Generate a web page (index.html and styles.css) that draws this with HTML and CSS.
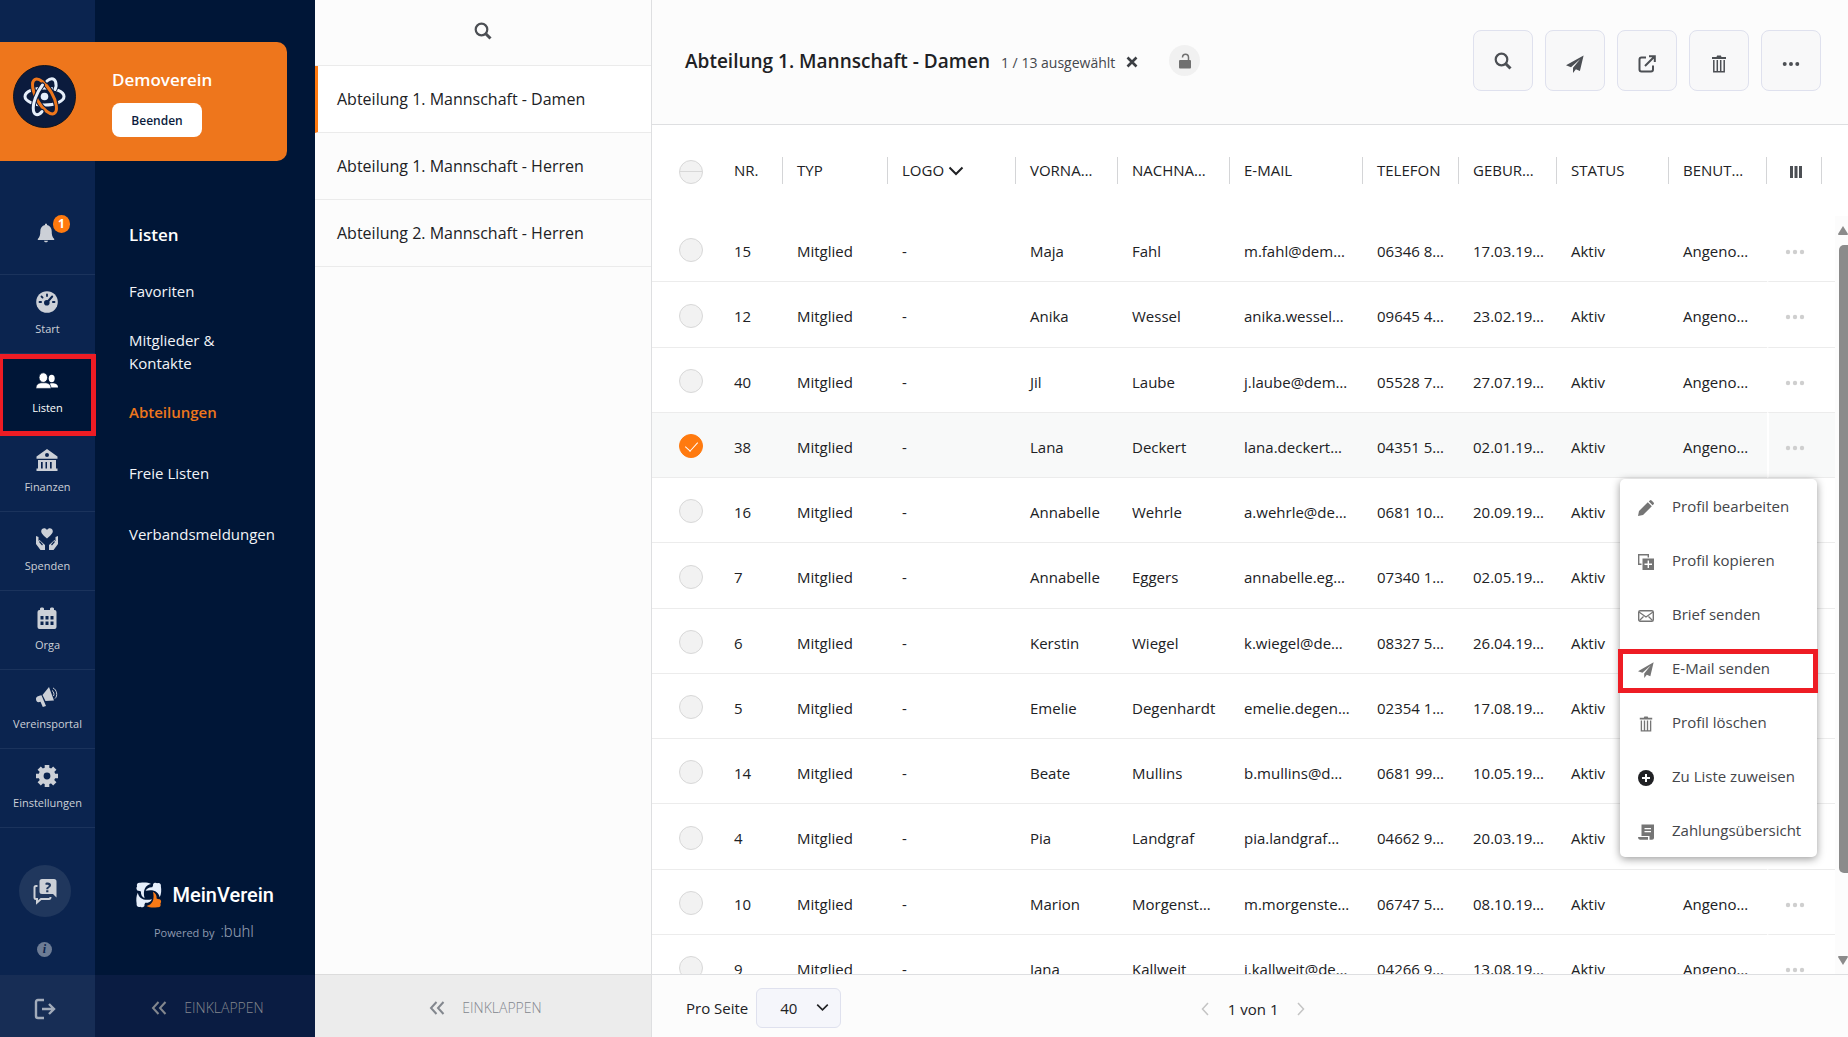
FILE: index.html
```
<!DOCTYPE html>
<html lang="de">
<head>
<meta charset="utf-8">
<meta name="viewport" content="width=device-width, initial-scale=1">
<title>MeinVerein – Abteilungen</title>
<link rel="stylesheet" href="styles.css">
</head>
<body>
<svg class="sprite" aria-hidden="true">
  <symbol id="i-search" viewBox="0 0 18 18"><circle cx="7.5" cy="7.5" r="5.8" fill="none" stroke="currentColor" stroke-width="2.2"/><path d="M11.5 11.5l5 5" stroke="currentColor" stroke-width="3"/></symbol>
  <symbol id="i-plane" viewBox="0 0 18 18"><path fill="currentColor" d="M17.6.4L0 10.3l5 1.9L14.3 4 7 12.8V18l2.9-3.7 4 1.6z"/></symbol>
  <symbol id="i-trash" viewBox="0 0 16 18"><path fill="currentColor" d="M1 2h4.5l.6-1.5h3.8L10.500 2H15v2H1z"/><path fill="none" stroke="currentColor" stroke-width="1.5" d="M2.8 5v11.8h10.400V5M6.300 5v11.500M9.700 5v11.500"/></symbol>
  <symbol id="i-dots" viewBox="0 0 20 6"><g fill="currentColor"><circle cx="3" cy="3" r="2.200"/><circle cx="10" cy="3" r="2.200"/><circle cx="17" cy="3" r="2.200"/></g></symbol>
  <symbol id="i-collapse" viewBox="0 0 16 14"><path d="M7.500 1L2 7l5.500 6M14.500 1L9 7l5.500 6" fill="none" stroke="currentColor" stroke-width="2"/></symbol>
  <symbol id="i-down" viewBox="0 0 16 10"><path d="M1.500 1.500L8 8l6.500-6.500" fill="none" stroke="currentColor" stroke-width="2"/></symbol>
</svg>

<div class="app">
  <aside class="sidebar">
    <div class="club">
      <svg class="club-logo" viewBox="0 0 63 63" aria-hidden="true">
        <circle cx="31.500" cy="31.500" r="31" fill="#0b1b3d" stroke="#11151f"/>
        <g fill="none" stroke-width="3" stroke-linecap="round">
          <ellipse cx="31.500" cy="31.500" rx="19.500" ry="8.500" stroke="#e6effb"/>
          <ellipse cx="31.500" cy="31.500" rx="19.500" ry="8" stroke="#0b1b3d" stroke-width="5" transform="rotate(60 31.500 31.500)"/>
          <ellipse cx="31.500" cy="31.500" rx="19.500" ry="8" stroke="#ee761c" transform="rotate(60 31.500 31.500)"/>
          <path d="M29 46.500c-3 4-7.500 4.500-8.500-.5-1.500-7 3.500-19 9-26M34 16c3-3 7-3.500 8.500.5 1 3 .5 6-.5 8" stroke="#0b1b3d" stroke-width="5"/>
          <path d="M29 46.500c-3 4-7.500 4.500-8.500-.5-1.500-7 3.500-19 9-26M34 16c3-3 7-3.500 8.500.5 1 3 .5 6-.5 8" stroke="#e6effb"/>
        </g>
        <circle cx="31.500" cy="31.500" r="3.800" fill="#e6effb"/>
      </svg>
      <div class="club-info">
        <strong class="club-name">Demoverein</strong>
        <button class="club-exit" type="button">Beenden</button>
      </div>
    </div>

    <nav class="rail" aria-label="Hauptmenü">
      <a class="rail-item rail-bell" href="#" aria-label="Benachrichtigungen">
        <svg class="bell" viewBox="0 0 18 20"><path fill="currentColor" d="M8 .8h2v1.100c3 .7 4.700 3 4.700 6 0 4 .6 6.200 2.500 8.100v.9H.8V16c1.900-1.900 2.500-4.100 2.500-8.100 0-3 1.700-5.300 4.700-6zM7 17.800h4c-.3 1-1 1.500-2 1.500s-1.700-.5-2-1.500z"/></svg>
        <span class="badge">1</span>
      </a>
      <a class="rail-item" href="#">
        <svg class="rail-icon" viewBox="0 0 22 22"><circle cx="11" cy="11" r="10.800" fill="currentColor"/><g stroke="#0b244f" stroke-width="1.800" stroke-linecap="round"><path d="M3.500 11h1.600M16.900 11h1.600M11 3.300v1.800M5.500 5.500l1.100 1.100"/><path d="M11 11.500L16.200 5.500" stroke-width="2"/></g><circle cx="10.800" cy="11.800" r="2.800" fill="#0b244f"/></svg>
        <span>Start</span>
      </a>
      <a class="rail-item active" href="#" aria-current="page">
        <svg class="rail-icon" viewBox="0 0 22 22"><g fill="currentColor"><ellipse cx="15.700" cy="8.500" rx="3" ry="3.700"/><path d="M14 13.500c4-.8 8 .3 8 4H15z"/><ellipse cx="7.300" cy="7.600" rx="4.300" ry="4.800" stroke="#001637" stroke-width=".8"/><path d="M0 18.400c0-4 2.500-5 5-5.600h4.800c2.700.6 5.200 1.600 5.200 5.600z" stroke="#001637" stroke-width=".6"/></g></svg>
        <span>Listen</span>
        <span class="marker"></span>
      </a>
      <a class="rail-item" href="#">
        <svg class="rail-icon" viewBox="0 0 22 22"><path fill="currentColor" fill-rule="evenodd" d="M11 0l10.500 7.500v2.200H.5V7.500zM11 4a2 2 0 100 4 2 2 0 000-4zM2 11h18v8.500h1.500V22H.5v-2.500H2zM5 13v6.500h1.700V13zM9.500 13v6.500H11V13zM14 13v6.500h1.700V13z"/></svg>
        <span>Finanzen</span>
      </a>
      <a class="rail-item" href="#">
        <svg class="rail-icon" viewBox="0 0 22 22"><path fill="currentColor" d="M11 10.500C7 7 5.200 5.500 5.200 3.300 5.200.2 9.300-.8 11 2c1.700-2.800 5.800-1.800 5.800 1.300 0 2.200-1.800 3.700-5.800 7.200zM0 8l2.500 1v4l1-1 5.500 5V22H4.500L0 16zM22 8l-2.500 1v4l-1-1-5.500 5V22h4.500L22 16z"/><path d="M3.500 13.500l3 3.500M18.500 13.500l-3 3.500" stroke="#0b244f" stroke-width="1.200"/></svg>
        <span>Spenden</span>
      </a>
      <a class="rail-item" href="#">
        <svg class="rail-icon" viewBox="0 0 22 22"><path fill="currentColor" fill-rule="evenodd" d="M4 3V1.500C4 0 8 0 8 1.500V3h6V1.500C14 0 18 0 18 1.500V3h.500q2 0 2 2v15q0 2-2 2h-15q-2 0-2-2V5q0-2 2-2zM4.500 9v3.500h3V9zM9.500 9v3.500h3V9zM14.500 9v3.500h3V9zM4.500 14.500V18h3v-3.500zM9.500 14.500V18h3v-3.500zM14.500 14.500V18h3v-3.500z"/></svg>
        <span>Orga</span>
      </a>
      <a class="rail-item" href="#">
        <svg class="rail-icon" viewBox="0 0 22 22"><path fill="currentColor" d="M13 1l5 13.500-8.500.5L6.500 9zM5.500 9.300l2.500 6 2 4.700-3.200 1-2.300-5.200C1.500 17 0 15.500 0 13c0-1.800 1.200-2.800 5.500-3.700z"/><path fill="none" stroke="currentColor" stroke-width="1" d="M16 4.500c1.800 1 2.500 4 1.500 5.500M17 2c3.800 1.500 5 8 2 10.500"/></svg>
        <span>Vereinsportal</span>
      </a>
      <a class="rail-item" href="#">
        <svg class="rail-icon" viewBox="0 0 22 22"><circle cx="11" cy="11" r="5.900" fill="none" stroke="currentColor" stroke-width="5"/><g stroke="currentColor" stroke-width="4.600"><path d="M11 0v4M11 18v4M0 11h4M18 11h4M3.200 3.200l3 3M15.800 15.800l3 3M3.200 18.800l3-3M15.800 6.200l3-3"/></g></svg>
        <span>Einstellungen</span>
      </a>
      <div class="rail-help">
        <button class="help" type="button" aria-label="Hilfe">
          <svg viewBox="0 0 24 28"><path fill="currentColor" fill-rule="evenodd" d="M9 2h12q2.500 0 2.500 2.500v16L20 17H9q-2.500 0-2.500-2.500v-10Q6.500 2 9 2zM12.500 6v1.800h2c1.800 0 1.500 1.400.3 2-1.200.7-1.500 1.200-1.500 2.400h2c0-1.400 2.700-1.800 2.700-4.100C18 6 15.500 5 12.500 6zM13.200 13.200v2h2.200v-2z"/><path d="M4.500 9H3Q1.500 9 1.500 10.500v10Q1.500 22 3 22h1v3.500L8 22h8q1.500 0 1.500-2" fill="none" stroke="currentColor" stroke-width="2"/></svg>
        </button>
        <button class="info" type="button" aria-label="Info">i</button>
      </div>
      <button class="logout" type="button" aria-label="Abmelden">
        <svg viewBox="0 0 22 22"><path d="M10 2H4Q2 2 2 4v14q0 2 2 2h6M8 11h12M15 6l5 5-5 5" fill="none" stroke="currentColor" stroke-width="2.400"/></svg>
      </button>
    </nav>

    <nav class="subnav" aria-label="Listen">
      <h2>Listen</h2>
      <ul>
        <li><a href="#">Favoriten</a></li>
        <li><a href="#">Mitglieder &amp;<br>Kontakte</a></li>
        <li><a class="active" href="#">Abteilungen</a></li>
        <li class="wide"><a href="#">Freie Listen</a></li>
        <li class="wide"><a href="#">Verbandsmeldungen</a></li>
      </ul>
      <div class="brand">
        <div class="brand-name">
          <svg viewBox="0 0 28 28" aria-hidden="true">
            <defs><path id="figure" d="M18.600 10.500c3 1.500 4.200 4 4 7.300 1.200.6 2 1.200 3.600.9 1.800 1.400 1.600 3.600.6 4.500 1 2.600-.8 4.600-3.300 4.100C19 28 15 27.800 11.500 26c6.200-1 9.300-7 7.100-15.500z"/></defs>
            <use href="#figure" fill="#f97a16"/>
            <g fill="#e6effb">
              <use href="#figure" transform="rotate(90 14 14)"/>
              <use href="#figure" transform="rotate(180 14 14)"/>
              <use href="#figure" transform="rotate(270 14 14)"/>
            </g>
          </svg>
          <span>MeinVerein</span>
        </div>
        <div class="brand-by">Powered by <span>:buhl</span></div>
      </div>
      <button class="collapse" type="button"><svg><use href="#i-collapse"/></svg>EINKLAPPEN</button>
    </nav>
  </aside>

  <section class="lists" aria-label="Abteilungen">
    <button class="lists-search" type="button" aria-label="Suchen"><svg><use href="#i-search"/></svg></button>
    <ul>
      <li><a class="active" href="#">Abteilung 1. Mannschaft - Damen</a></li>
      <li><a href="#">Abteilung 1. Mannschaft - Herren</a></li>
      <li><a href="#">Abteilung 2. Mannschaft - Herren</a></li>
    </ul>
    <button class="collapse" type="button"><svg><use href="#i-collapse"/></svg>EINKLAPPEN</button>
  </section>

  <main class="content">
    <header class="toolbar">
      <h1>Abteilung 1. Mannschaft - Damen</h1>
      <span class="selection">1 / 13 ausgewählt</span>
      <button class="clear" type="button" aria-label="Auswahl aufheben"><svg viewBox="0 0 12 12"><path d="M1.500 1.500l9 9M10.500 1.500l-9 9" stroke="currentColor" stroke-width="2.600"/></svg></button>
      <button class="lock" type="button" aria-label="Entsperrt"><svg viewBox="0 0 12 16"><rect x="0" y="7" width="12" height="8.500" rx="1" fill="currentColor"/><path d="M3.500 4.500C3.500 0 9.500 0 9.500 4.500V7" fill="none" stroke="currentColor" stroke-width="1.500"/></svg></button>
      <div class="tools">
        <button class="tool tool-search" type="button" aria-label="Suchen"><svg><use href="#i-search"/></svg></button>
        <button class="tool" type="button" aria-label="E-Mail senden"><svg><use href="#i-plane"/></svg></button>
        <button class="tool" type="button" aria-label="Exportieren"><svg viewBox="0 0 18 18"><path d="M8 2.500H3.500q-2 0-2 2V14.500q0 2 2 2h9.500q2 0 2-2V10.500M7 11L16 2M11 1.200h5.800V7" fill="none" stroke="currentColor" stroke-width="2"/></svg></button>
        <button class="tool" type="button" aria-label="Löschen"><svg><use href="#i-trash"/></svg></button>
        <button class="tool" type="button" aria-label="Mehr"><svg><use href="#i-dots"/></svg></button>
      </div>
    </header>

    <div class="grid">
      <div class="grid-scroll">
        <table>
          <colgroup><col class="c-check"><col class="c-nr"><col class="c-typ"><col class="c-logo"><col class="c-first"><col class="c-last"><col class="c-mail"><col class="c-phone"><col class="c-birth"><col class="c-status"><col class="c-user"><col class="c-more"></colgroup>
          <thead>
            <tr>
              <th class="check"><input class="all" type="checkbox" aria-label="Alle auswählen"></th>
              <th><span>NR.</span></th>
              <th><span>TYP</span></th>
              <th><span>LOGO <svg class="sort"><use href="#i-down"/></svg></span></th>
              <th><span>VORNA…</span></th>
              <th><span>NACHNA…</span></th>
              <th><span>E-MAIL</span></th>
              <th><span>TELEFON</span></th>
              <th><span>GEBUR…</span></th>
              <th><span>STATUS</span></th>
              <th><span>BENUT…</span></th>
              <th class="more"><span><button class="columns" type="button" aria-label="Spalten"><svg viewBox="0 0 12 12"><path fill="currentColor" d="M0 0h3v12H0zM4.500 0h3v12h-3zM9 0h3v12H9z"/></svg></button></span></th>
            </tr>
          </thead>
          <tbody>
            <tr><td class="check"><input type="checkbox" aria-label="Maja Fahl"></td><td>15</td><td>Mitglied</td><td>-</td><td>Maja</td><td>Fahl</td><td>m.fahl@dem…</td><td>06346 8…</td><td>17.03.19…</td><td>Aktiv</td><td>Angeno…</td><td class="more"><button type="button" aria-label="Aktionen"><svg><use href="#i-dots"/></svg></button></td></tr>
            <tr><td class="check"><input type="checkbox" aria-label="Anika Wessel"></td><td>12</td><td>Mitglied</td><td>-</td><td>Anika</td><td>Wessel</td><td>anika.wessel…</td><td>09645 4…</td><td>23.02.19…</td><td>Aktiv</td><td>Angeno…</td><td class="more"><button type="button" aria-label="Aktionen"><svg><use href="#i-dots"/></svg></button></td></tr>
            <tr><td class="check"><input type="checkbox" aria-label="Jil Laube"></td><td>40</td><td>Mitglied</td><td>-</td><td>Jil</td><td>Laube</td><td>j.laube@dem…</td><td>05528 7…</td><td>27.07.19…</td><td>Aktiv</td><td>Angeno…</td><td class="more"><button type="button" aria-label="Aktionen"><svg><use href="#i-dots"/></svg></button></td></tr>
            <tr class="selected"><td class="check"><input type="checkbox" checked aria-label="Lana Deckert"></td><td>38</td><td>Mitglied</td><td>-</td><td>Lana</td><td>Deckert</td><td>lana.deckert…</td><td>04351 5…</td><td>02.01.19…</td><td>Aktiv</td><td>Angeno…</td><td class="more"><button type="button" aria-label="Aktionen" aria-expanded="true"><svg><use href="#i-dots"/></svg></button>
              <ul class="menu">
                <li><button type="button"><svg viewBox="0 0 16 16"><path fill="currentColor" d="M0 16l1-5L9.800 2.300l4 4L5 15zM10.800 1.400l1-1q.9-.7 1.800 0l2 2q.8.900 0 1.800l-1 1z"/></svg>Profil bearbeiten</button></li>
                <li><button type="button"><svg viewBox="0 0 16 16"><path d="M3.500 10.300H.7V.7h9.600v2.800" fill="none" stroke="currentColor" stroke-width="1.400"/><path fill="currentColor" fill-rule="evenodd" d="M4.500 4.500H16V16H4.500zM9.600 6.500v3.100H6.500v1.400h3.100v3h1.400v-3h3V9.600h-3V6.500z"/></svg>Profil kopieren</button></li>
                <li><button type="button"><svg viewBox="0 0 16 16"><rect x=".7" y="2.700" width="14.600" height="10.600" rx="1.500" fill="none" stroke="currentColor" stroke-width="1.400"/><path d="M1 4l7 5 7-5M1.500 12.500l4-4M14.500 12.500l-4-4" fill="none" stroke="currentColor" stroke-width="1.200"/></svg>Brief senden</button></li>
                <li><button type="button"><svg><use href="#i-plane"/></svg>E-Mail senden</button><span class="marker"></span></li>
                <li><button type="button"><svg><use href="#i-trash"/></svg>Profil löschen</button></li>
                <li><button type="button"><svg class="dark" viewBox="0 0 16 16"><circle cx="8" cy="8" r="8" fill="currentColor"/><path d="M8 4v8M4 8h8" stroke="#fff" stroke-width="2"/></svg>Zu Liste zuweisen</button></li>
                <li><button type="button"><svg viewBox="0 0 16 16"><path fill="currentColor" fill-rule="evenodd" d="M3.500.5H16V14q0 1.800-2 1.800h-2.500V12H3.500zM6.500 4v1.200H13V4zM6.500 7v1.200H13V7zM0 13h10v2.800H2Q0 15.500 0 13z"/></svg>Zahlungsübersicht</button></li>
              </ul></td></tr>
            <tr><td class="check"><input type="checkbox" aria-label="Annabelle Wehrle"></td><td>16</td><td>Mitglied</td><td>-</td><td>Annabelle</td><td>Wehrle</td><td>a.wehrle@de…</td><td>0681 10…</td><td>20.09.19…</td><td>Aktiv</td><td></td><td class="more"></td></tr>
            <tr><td class="check"><input type="checkbox" aria-label="Annabelle Eggers"></td><td>7</td><td>Mitglied</td><td>-</td><td>Annabelle</td><td>Eggers</td><td>annabelle.eg…</td><td>07340 1…</td><td>02.05.19…</td><td>Aktiv</td><td></td><td class="more"></td></tr>
            <tr><td class="check"><input type="checkbox" aria-label="Kerstin Wiegel"></td><td>6</td><td>Mitglied</td><td>-</td><td>Kerstin</td><td>Wiegel</td><td>k.wiegel@de…</td><td>08327 5…</td><td>26.04.19…</td><td>Aktiv</td><td></td><td class="more"></td></tr>
            <tr><td class="check"><input type="checkbox" aria-label="Emelie Degenhardt"></td><td>5</td><td>Mitglied</td><td>-</td><td>Emelie</td><td>Degenhardt</td><td>emelie.degen…</td><td>02354 1…</td><td>17.08.19…</td><td>Aktiv</td><td></td><td class="more"></td></tr>
            <tr><td class="check"><input type="checkbox" aria-label="Beate Mullins"></td><td>14</td><td>Mitglied</td><td>-</td><td>Beate</td><td>Mullins</td><td>b.mullins@d…</td><td>0681 99…</td><td>10.05.19…</td><td>Aktiv</td><td></td><td class="more"></td></tr>
            <tr><td class="check"><input type="checkbox" aria-label="Pia Landgraf"></td><td>4</td><td>Mitglied</td><td>-</td><td>Pia</td><td>Landgraf</td><td>pia.landgraf…</td><td>04662 9…</td><td>20.03.19…</td><td>Aktiv</td><td></td><td class="more"></td></tr>
            <tr><td class="check"><input type="checkbox" aria-label="Marion Morgenstern"></td><td>10</td><td>Mitglied</td><td>-</td><td>Marion</td><td>Morgenst…</td><td>m.morgenste…</td><td>06747 5…</td><td>08.10.19…</td><td>Aktiv</td><td>Angeno…</td><td class="more"><button type="button" aria-label="Aktionen"><svg><use href="#i-dots"/></svg></button></td></tr>
            <tr><td class="check"><input type="checkbox" aria-label="Jana Kallweit"></td><td>9</td><td>Mitglied</td><td>-</td><td>Jana</td><td>Kallweit</td><td>j.kallweit@de…</td><td>04266 9…</td><td>13.08.19…</td><td>Aktiv</td><td>Angeno…</td><td class="more"><button type="button" aria-label="Aktionen"><svg><use href="#i-dots"/></svg></button></td></tr>
          </tbody>
        </table>
      </div>
      <div class="scrollbar" aria-hidden="true">
        <svg viewBox="0 0 10 10"><path fill="#8b8b8b" d="M5 0l5 8q0 1-1 1H1Q0 9 0 8z"/></svg>
        <span class="thumb"></span>
        <svg viewBox="0 0 10 10"><path fill="#8b8b8b" d="M5 10L0 2q0-1 1-1h8q1 0 1 1z"/></svg>
      </div>
    </div>

    <footer class="pager">
      <label for="per-page">Pro Seite</label>
      <div class="select">
        <select id="per-page"><option>20</option><option selected>40</option></select>
        <svg><use href="#i-down"/></svg>
      </div>
      <div class="pages">
        <button type="button" aria-label="Zurück"><svg viewBox="0 0 8 14"><path d="M7 1L1.500 7 7 13" fill="none" stroke="currentColor" stroke-width="1.500"/></svg></button>
        <span>1 von 1</span>
        <button type="button" aria-label="Weiter"><svg viewBox="0 0 8 14"><path d="M1 1l5.500 6L1 13" fill="none" stroke="currentColor" stroke-width="1.500"/></svg></button>
      </div>
    </footer>
  </main>
</div>
</body>
</html>
```

FILE: styles.css
```
* {
  box-sizing: border-box;
}

body {
  margin: 0;
  font-family: "Open Sans", "Noto Sans", sans-serif;
  font-size: 15px;
  color: #202124;
  background: #fff;
}

button {
  display: flex;
  align-items: center;
  justify-content: center;
  margin: 0;
  padding: 0;
  border: 0;
  background: none;
  color: inherit;
  font: inherit;
}

a {
  color: inherit;
  text-decoration: none;
}

ul {
  list-style: none;
  margin: 0;
  padding: 0;
}

.sprite {
  position: absolute;
  width: 0;
  height: 0;
}

.app {
  display: flex;
  height: 100vh;
  overflow: hidden;
}

/* Sidebar */

.sidebar {
  position: relative;
  display: flex;
  flex: none;
}

.club {
  position: absolute;
  top: 42px;
  left: 0;
  right: 28px;
  display: flex;
  gap: 36px;
  padding: 23px 13px;
  height: 119px;
  border-radius: 0 10px 10px 0;
  background: #ee761c;
}

.club-logo {
  flex: none;
  width: 63px;
  height: 63px;
}

.club-info {
  display: flex;
  flex-direction: column;
  align-items: flex-start;
  gap: 11px;
  padding-top: 3px;
}

.club-name {
  color: #fff;
  font-size: 17px;
  line-height: 24px;
  font-weight: 600;
}

.club-exit {
  width: 90px;
  height: 34px;
  border-radius: 8px;
  background: #fff;
  color: #0b1b3d;
  font-size: 12px;
  font-weight: 600;
}

.rail {
  display: flex;
  flex-direction: column;
  width: 95px;
  padding-top: 196px;
  background: #0b244f;
  color: #ccd0d7;
}

.rail-item {
  position: relative;
  display: flex;
  flex: none;
  flex-direction: column;
  align-items: center;
  gap: 8px;
  height: 79px;
  padding-top: 16px;
  border-bottom: 1px solid #1b335c;
  font-size: 11px;
  line-height: 16px;
}

.rail-item.active {
  background: #001637;
  color: #fff;
}

.rail-icon {
  width: 22px;
  height: 22px;
  margin-right: 2px;
}

.rail-bell {
  padding: 27px 3px 0 0;
}

.bell {
  width: 18px;
  height: 20px;
}

.badge {
  position: absolute;
  top: 19px;
  left: 53px;
  width: 17px;
  height: 18px;
  border-radius: 9px;
  background: #ff7a0f;
  color: #fff;
  font-size: 12px;
  font-weight: 700;
  line-height: 18px;
  text-align: center;
}

.marker {
  position: absolute;
  border: 5px solid #ee1c24;
}

.rail .marker {
  top: 0;
  left: -2px;
  right: -1px;
  bottom: -4px;
  z-index: 1;
}

.rail-help {
  display: flex;
  flex-direction: column;
  align-items: center;
  gap: 25px;
  margin-top: auto;
  padding: 0 6px 18px 0;
}

.help {
  width: 52px;
  height: 52px;
  border-radius: 50%;
  background: #20375d;
}

.help svg {
  width: 24px;
  height: 28px;
}

.info {
  width: 15px;
  height: 15px;
  border-radius: 50%;
  background: #6d7c95;
  color: #0b244f;
  font: italic 700 12px "Liberation Serif", serif;
}

.logout {
  flex: none;
  height: 62px;
  padding: 5px 6px 0 0;
  background: #172d55;
  color: #a2abba;
}

.logout svg {
  width: 22px;
  height: 22px;
}

.subnav {
  display: flex;
  flex-direction: column;
  width: 220px;
  padding-top: 223px;
  background: #001637;
  color: #f2f4f7;
  line-height: 23px;
}

.subnav h2 {
  margin: 0 34px 34px;
  color: #fff;
  font-size: 17px;
  font-weight: 600;
}

.subnav ul {
  display: flex;
  flex-direction: column;
  gap: 26px;
  margin: 0 34px;
  font-weight: 500;
}

.subnav a {
  display: block;
}

.subnav .wide {
  padding-top: 12px;
}

.subnav .active {
  color: #ee761c;
  font-weight: 600;
}

.brand {
  display: flex;
  flex-direction: column;
  gap: 11px;
  margin-top: auto;
  padding: 0 41px 31px;
}

.brand-name {
  display: flex;
  align-items: center;
  gap: 11px;
  color: #fff;
  font-family: Roboto, sans-serif;
  font-size: 20px;
  font-weight: 500;
}

.brand-name svg {
  width: 28px;
  height: 28px;
}

.brand-by {
  display: flex;
  align-items: baseline;
  gap: 6px;
  padding-left: 18px;
  color: #8f9bb0;
  font-size: 11px;
  white-space: nowrap;
}

.brand-by span {
  font-family: Roboto, sans-serif;
  font-size: 16px;
  font-weight: 300;
}

.collapse {
  flex: none;
  gap: 17px;
  height: 62px;
  padding: 3px 0 0 5px;
  color: #83878e;
  font-size: 14px;
  font-weight: 300;
}

.collapse svg {
  width: 16px;
  height: 14px;
}

.subnav .collapse {
  background: #0a1c42;
}

/* Department lists */

.lists {
  display: flex;
  flex: none;
  flex-direction: column;
  width: 337px;
  border-right: 1px solid #dedfe1;
  background: #fcfcfc;
  font-size: 16px;
}

.lists-search {
  height: 66px;
  padding-bottom: 4px;
  border-bottom: 1px solid #ebebeb;
  color: #4c4f54;
}

.lists-search svg {
  width: 18px;
  height: 18px;
}

.lists ul {
  flex: 1;
}

.lists a {
  display: flex;
  align-items: center;
  height: 67px;
  padding-left: 22px;
  border-bottom: 1px solid #ebebeb;
}

.lists .active {
  padding-left: 19px;
  border-left: 3px solid #ff7a0f;
  background: #fff;
}

.lists .collapse {
  height: 63px;
  border-top: 1px solid #dcdcdc;
  background: #ececec;
}

/* Main area */

.content {
  display: flex;
  flex: 1;
  flex-direction: column;
  min-width: 0;
}

.toolbar {
  display: flex;
  flex: none;
  align-items: center;
  height: 125px;
  padding: 0 27px 3px 33px;
  border-bottom: 1px solid #dedfe1;
  background: #fcfcfc;
  white-space: nowrap;
}

.toolbar h1 {
  margin: 0;
  font-size: 19px;
  font-weight: 600;
}

.selection {
  margin-left: 11px;
  padding-top: 3px;
  color: #44474c;
  font-size: 14px;
}

.clear {
  margin-left: 11px;
  padding-top: 3px;
  color: #3c3f44;
}

.clear svg {
  width: 12px;
  height: 12px;
}

.lock {
  width: 31px;
  height: 31px;
  margin-left: 31px;
  border-radius: 50%;
  background: #f1f1f1;
  color: #707070;
}

.lock svg {
  width: 12px;
  height: 16px;
}

.tools {
  display: flex;
  gap: 12px;
  margin-left: auto;
}

.tool {
  width: 60px;
  height: 61px;
  padding-top: 6px;
  border: 1px solid #dfe1ee;
  border-radius: 8px;
  background: #f8f8f9;
  color: #4c4f54;
}

.tool-search {
  padding-top: 0;
}

.tool svg {
  width: 18px;
  height: 18px;
}

/* Member table */

.grid {
  display: flex;
  flex: 1;
  min-height: 0;
}

.grid-scroll {
  flex: 1;
  min-width: 0;
  overflow: hidden;
}

table {
  width: 100%;
  table-layout: fixed;
  border-collapse: separate;
  border-spacing: 0;
}

.c-check { width: 68px; }
.c-nr { width: 63px; }
.c-typ { width: 105px; }
.c-logo { width: 128px; }
.c-first { width: 102px; }
.c-last { width: 112px; }
.c-mail { width: 133px; }
.c-phone { width: 96px; }
.c-birth { width: 98px; }
.c-status { width: 112px; }
.c-user { width: 98px; }
.c-more { width: 68px; }

th,
td {
  padding: 0 0 0 14px;
  text-align: left;
  white-space: nowrap;
}

th {
  height: 92px;
  padding-bottom: 2px;
  font-weight: 500;
}

th span {
  display: block;
  height: 27px;
  border-right: 1px solid #d4d5d7;
  line-height: 27px;
}

td {
  height: 65px;
  padding-top: 3px;
  border-bottom: 1px solid #ececec;
}

tbody tr:nth-child(4n + 2) td {
  height: 66px;
}

.selected td {
  background: #f8f9f9;
}

.check {
  padding: 2px 0 0 27px;
}

td.more {
  position: relative;
  padding: 5px 15px 0 0;
  border-left: 2px solid #fff;
}

.more > button {
  margin: 0 auto;
  color: #cfcfcf;
}

.more > button svg {
  width: 20px;
  height: 6px;
}

th.more {
  padding: 0 13px 2px 0;
}

.columns {
  width: 100%;
  height: 30px;
  padding-left: 3px;
  color: #4c4f54;
}

.columns svg {
  width: 12px;
  height: 12px;
}

.sort {
  width: 16px;
  height: 10px;
}

input[type="checkbox"] {
  appearance: none;
  display: block;
  position: relative;
  width: 24px;
  height: 24px;
  margin: 0;
  border: 1px solid #d8d8d8;
  border-radius: 50%;
  background: #f2f2f2;
}

input.all::after {
  content: "";
  position: absolute;
  top: 10px;
  left: 0;
  right: 0;
  border-top: 1px solid #d8d8d8;
}

input[type="checkbox"]:checked {
  border-color: #ff7a0f;
  background: #ff7a0f;
}

input:checked::after {
  content: "";
  position: absolute;
  top: 4px;
  left: 8px;
  width: 6px;
  height: 11px;
  border: solid #fff;
  border-width: 0 1px 1px 0;
  transform: rotate(42deg);
}

.menu {
  position: absolute;
  top: 66px;
  right: 18px;
  z-index: 2;
  width: 197px;
  border-radius: 5px;
  background: #fff;
  box-shadow: 0 2px 9px rgba(0, 0, 0, 0.4);
  color: #44464a;
}

.menu li {
  position: relative;
}

.menu button {
  justify-content: flex-start;
  gap: 18px;
  width: 100%;
  height: 54px;
  padding-left: 18px;
}

.menu svg {
  width: 16px;
  height: 16px;
  margin-top: 4px;
  color: #757575;
}

.menu .dark {
  color: #202124;
}

.menu .marker {
  top: 8px;
  left: -2px;
  right: -1px;
  bottom: 2px;
}

.scrollbar {
  display: flex;
  flex: none;
  flex-direction: column;
  align-items: flex-end;
  gap: 9px;
  width: 13px;
  margin-top: 91px;
  padding: 10px 0 9px;
  background: #fcfcfc;
}

.scrollbar svg {
  flex: none;
  width: 10px;
  height: 10px;
}

.thumb {
  flex: 0 1 85%;
  width: 9px;
  margin-bottom: auto;
  border-radius: 5px 0 0 5px;
  background: #8b8b8b;
}

/* Paging */

.pager {
  display: flex;
  flex: none;
  align-items: center;
  gap: 8px;
  height: 63px;
  padding: 4px 34px 0;
  border-top: 1px solid #dedfe1;
  background: #fcfcfc;
}

.select {
  position: relative;
}

.select select {
  appearance: none;
  display: block;
  width: 85px;
  height: 40px;
  padding: 0 0 0 23px;
  border: 1px solid #dfe1ee;
  border-radius: 6px;
  background: #f5f6fb;
  color: inherit;
  font: inherit;
}

.select svg {
  position: absolute;
  top: 15px;
  right: 12px;
  width: 13px;
  height: 9px;
  pointer-events: none;
}

.pages {
  display: flex;
  align-items: center;
  gap: 19px;
  margin: 0 auto;
  padding: 2px 157px 0 0;
}

.pages button {
  color: #c4c4c4;
}

.pages svg {
  width: 8px;
  height: 14px;
}
```
